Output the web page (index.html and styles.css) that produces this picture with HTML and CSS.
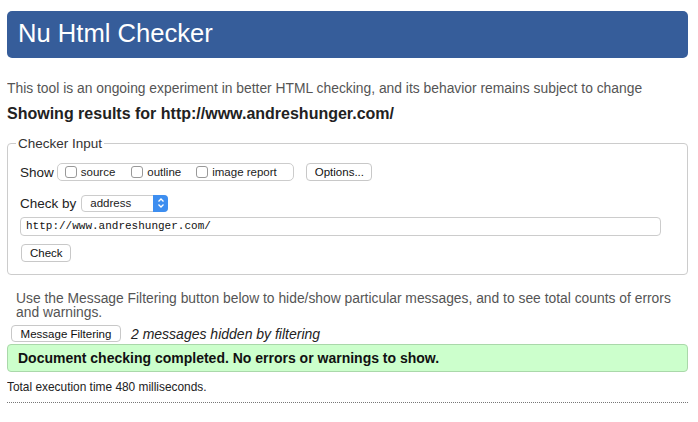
FILE: index.html
```html
<!DOCTYPE html>
<html>
  <head>
    <title>Nu Html Checker</title>
    <meta charset="UTF-8">
    <meta name="viewport" content="width=device-width, initial-scale=1.0">
    <link rel="stylesheet" href="styles.css">
  </head>
  <body>
    <h1 class="banner">Nu Html Checker</h1>
    <p class="tagline">This tool is an ongoing experiment in better HTML checking, and its behavior remains subject to change</p>
    <p class="results">Showing results for http://www.andreshunger.com/</p>

    <fieldset class="input-box">
      <legend>Checker Input</legend>
      <div class="row">
        <span class="label">Show</span>
        <span class="checks">
          <label><span class="cb"></span>source</label>
          <label><span class="cb"></span>outline</label>
          <label><span class="cb"></span>image report</label>
        </span>
        <button class="btn options">Options...</button>
      </div>
      <div class="row by">
        <span class="label">Check by</span>
        <span class="select">address<span class="stepper">
          <svg width="8" height="12" viewBox="0 0 8 12"><path d="M1.5 4.5 L4 2 L6.5 4.5 M1.5 7.5 L4 10 L6.5 7.5" fill="none" stroke="#fff" stroke-width="1.3"/></svg>
        </span></span>
      </div>
      <div class="url">http://www.andreshunger.com/</div>
      <button class="btn check">Check</button>
    </fieldset>

    <p class="filter-note">Use the Message Filtering button below to hide/show particular messages, and to see total counts of errors and warnings.</p>
    <div class="filter-row">
      <button class="btn">Message Filtering</button>
      <em>2 messages hidden by filtering</em>
    </div>
    <div class="success">Document checking completed. No errors or warnings to show.</div>
    <p class="timing">Total execution time 480 milliseconds.</p>
  </body>
</html>
```

FILE: styles.css
```css
*{
   box-sizing: border-box;
}

body
{
   margin: 11px 10px 0 7px;
   font-family: "Liberation Sans", Arial, sans-serif;
   color: #222;
   background: #fff;
}

.banner
{
   margin: 0;
   height: 47px;
   padding: 0 11px;
   background: #365d9a;
   color: #fff;
   border-radius: 5px;
   font-size: 25.6px;
   font-weight: normal;
   line-height: 45px;
}

.tagline
{
   margin: 22px 0 0;
   font-size: 13.85px;
   line-height: 16px;
   color: #555;
}

.results
{
   margin: 8px 0 0;
   font-size: 16px;
   font-weight: bold;
   line-height: 20px;
}

.input-box
{
   margin: 12px 0 0;
   padding: 12px 12px 12px 12px;
   border: 1px solid #ccc;
   border-radius: 4px;
}

.input-box legend
{
   padding: 0 2px;
   margin-left: -4px;
   font-size: 13.5px;
   color: #333;
}

.row
{
   display: flex;
   align-items: center;
   height: 18px;
}

.label
{
   font-size: 13.5px;
   margin-right: 3px;
}

.checks
{
   display: flex;
   align-items: center;
   height: 18px;
   width: 237px;
   padding: 0 7px;
   gap: 15px;
   border: 1px solid #ccc;
   border-radius: 5px;
   font-size: 11.5px;
}

.checks label
{
   display: flex;
   align-items: center;
   gap: 4px;
}

.checks label:nth-child(2)
{
   margin-left: 1px;
}

.cb
{
   display: inline-block;
   width: 12px;
   height: 12px;
   border: 1px solid #999;
   border-radius: 3px;
   background: #fff;
}

.btn
{
   font-family: "Liberation Sans", Arial, sans-serif;
   font-size: 11.5px;
   color: #111;
   background: #fff;
   border: 1px solid #c8c8c8;
   border-radius: 4px;
   height: 18px;
   padding: 0 8px;
   line-height: 16px;
}

.options
{
   margin-left: 12px;
   width: 66px;
}

.by
{
   margin-top: 13px;
}

.by .label
{
   margin-right: 5px;
}

.select
{
   display: flex;
   align-items: center;
   justify-content: space-between;
   width: 87px;
   height: 17px;
   padding-left: 8px;
   border: 1px solid #ccc;
   border-radius: 4px;
   font-size: 11.5px;
}

.stepper
{
   display: flex;
   align-items: center;
   justify-content: center;
   width: 15px;
   height: 17px;
   margin-right: -1px;
   background: #3d8ef0;
   border-radius: 0 4px 4px 0;
}

.url
{
   margin-top: 5px;
   width: 641px;
   height: 19px;
   padding-left: 5px;
   border: 1px solid #ccc;
   border-radius: 4px;
   font-family: "Liberation Mono", monospace;
   font-size: 11px;
   line-height: 17px;
   color: #111;
}

.check
{
   display: block;
   margin-top: 8px;
   margin-left: 1px;
   width: 50px;
}

.filter-note
{
   margin: 16px 0 0 9px;
   font-size: 13.85px;
   line-height: 14px;
   color: #555;
}

.filter-row
{
   display: flex;
   align-items: center;
   margin-top: 6px;
   margin-left: 4px;
   gap: 10px;
   font-size: 14px;
}

.filter-row .btn
{
   width: 110px;
   height: 17px;
   padding: 0;
}

.success
{
   margin-top: 2px;
   height: 28px;
   padding-left: 10px;
   background: #ccffcc;
   border: 1px solid #aad8aa;
   border-radius: 4px;
   font-size: 14px;
   font-weight: bold;
   line-height: 26px;
   color: #111;
}

.timing
{
   margin: 8px 0 0;
   padding-bottom: 8px;
   border-bottom: 1px dotted #777;
   font-size: 11.9px;
   line-height: 14px;
}
```
